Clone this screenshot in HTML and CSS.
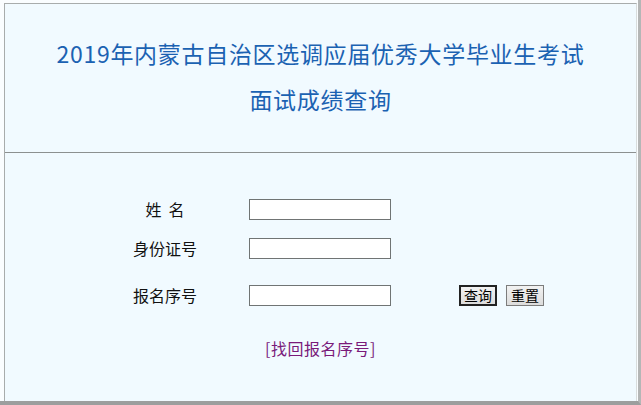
FILE: index.html
```html
<!DOCTYPE html>
<html lang="zh-CN">
<head>
    <meta charset="UTF-8">
    <title>面试成绩查询</title>
    <link rel="stylesheet" href="styles.css">
</head>
<body>
    <div class="page">
        <div class="frame">
            <div class="header">
                <div class="title">2019年内蒙古自治区选调应届优秀大学毕业生考试</div>
                <div class="title">面试成绩查询</div>
            </div>
            <div class="content">
                <form class="query-form">
                    <label class="label">姓&nbsp;&nbsp;名</label>
                    <input class="field" type="text">
                    <span></span>

                    <label class="label">身份证号</label>
                    <input class="field" type="text">
                    <span></span>

                    <label class="label">报名序号</label>
                    <input class="field" type="text">
                    <div class="buttons">
                        <button type="button" class="btn btn-default">查询</button>
                        <button type="reset" class="btn">重置</button>
                    </div>
                </form>
                <div class="link-row">
                    <a href="#" class="find-link">[找回报名序号]</a>
                </div>
            </div>
        </div>
    </div>
</body>
</html>
```

FILE: styles.css
```css
html, body {
    margin: 0;
    padding: 0;
}
body {
    background-color: #fafdff;
    font-family: "Noto Sans CJK SC", "DejaVu Sans", sans-serif;
    color: #111;
}
.page {
    width: 641px;
    height: 405px;
    box-sizing: border-box;
    padding: 3px 0 0 4px;
    border-bottom: 4px solid #9c9e9e;
    border-right: 3px solid #b4b6b6;
    overflow: hidden;
}
.frame {
    width: 633px;
    height: 398px;
    box-sizing: border-box;
    border-top: 1px solid #a8acac;
    border-left: 1px solid #a8acac;
    border-right: 1px solid #d8dcdc;
    background-color: #f1faff;
}
.header {
    height: 149px;
    box-sizing: border-box;
    padding-top: 26px;
    border-bottom: 1px solid #8c9090;
    text-align: center;
}
.title {
    font-size: 23px;
    line-height: 46px;
    color: #1b62b2;
    letter-spacing: 0.7px;
}
.content {
    padding-top: 46px;
}
.query-form {
    display: grid;
    grid-template-columns: 160px 206px auto;
    grid-template-rows: 39px 47px 21px;
    column-gap: 4px;
    margin-left: 80px;
    align-items: start;
}
.label {
    font-size: 16px;
    line-height: 21px;
    text-align: center;
    color: #111;
}
.field {
    width: 142px;
    height: 21px;
    box-sizing: border-box;
    margin: 0;
    border: 1px solid #707474;
    background: #fff;
    padding: 0 2px;
}
.buttons {
    display: flex;
    gap: 9px;
}
.btn {
    height: 21px;
    width: 38px;
    box-sizing: border-box;
    margin: 0;
    padding: 0;
    font-family: "Noto Sans CJK SC", sans-serif;
    font-size: 14px;
    line-height: 17px;
    color: #000;
    background: linear-gradient(#f2f2f2, #dcdcdc);
    border: 1px solid #7c7c7c;
}
.btn-default {
    border: 2px solid #222;
}
.link-row {
    margin-top: 30px;
    text-align: center;
}
.find-link {
    font-size: 16px;
    line-height: 18px;
    letter-spacing: 0.5px;
    color: #7a1a7a;
    text-decoration: none;
}
```
